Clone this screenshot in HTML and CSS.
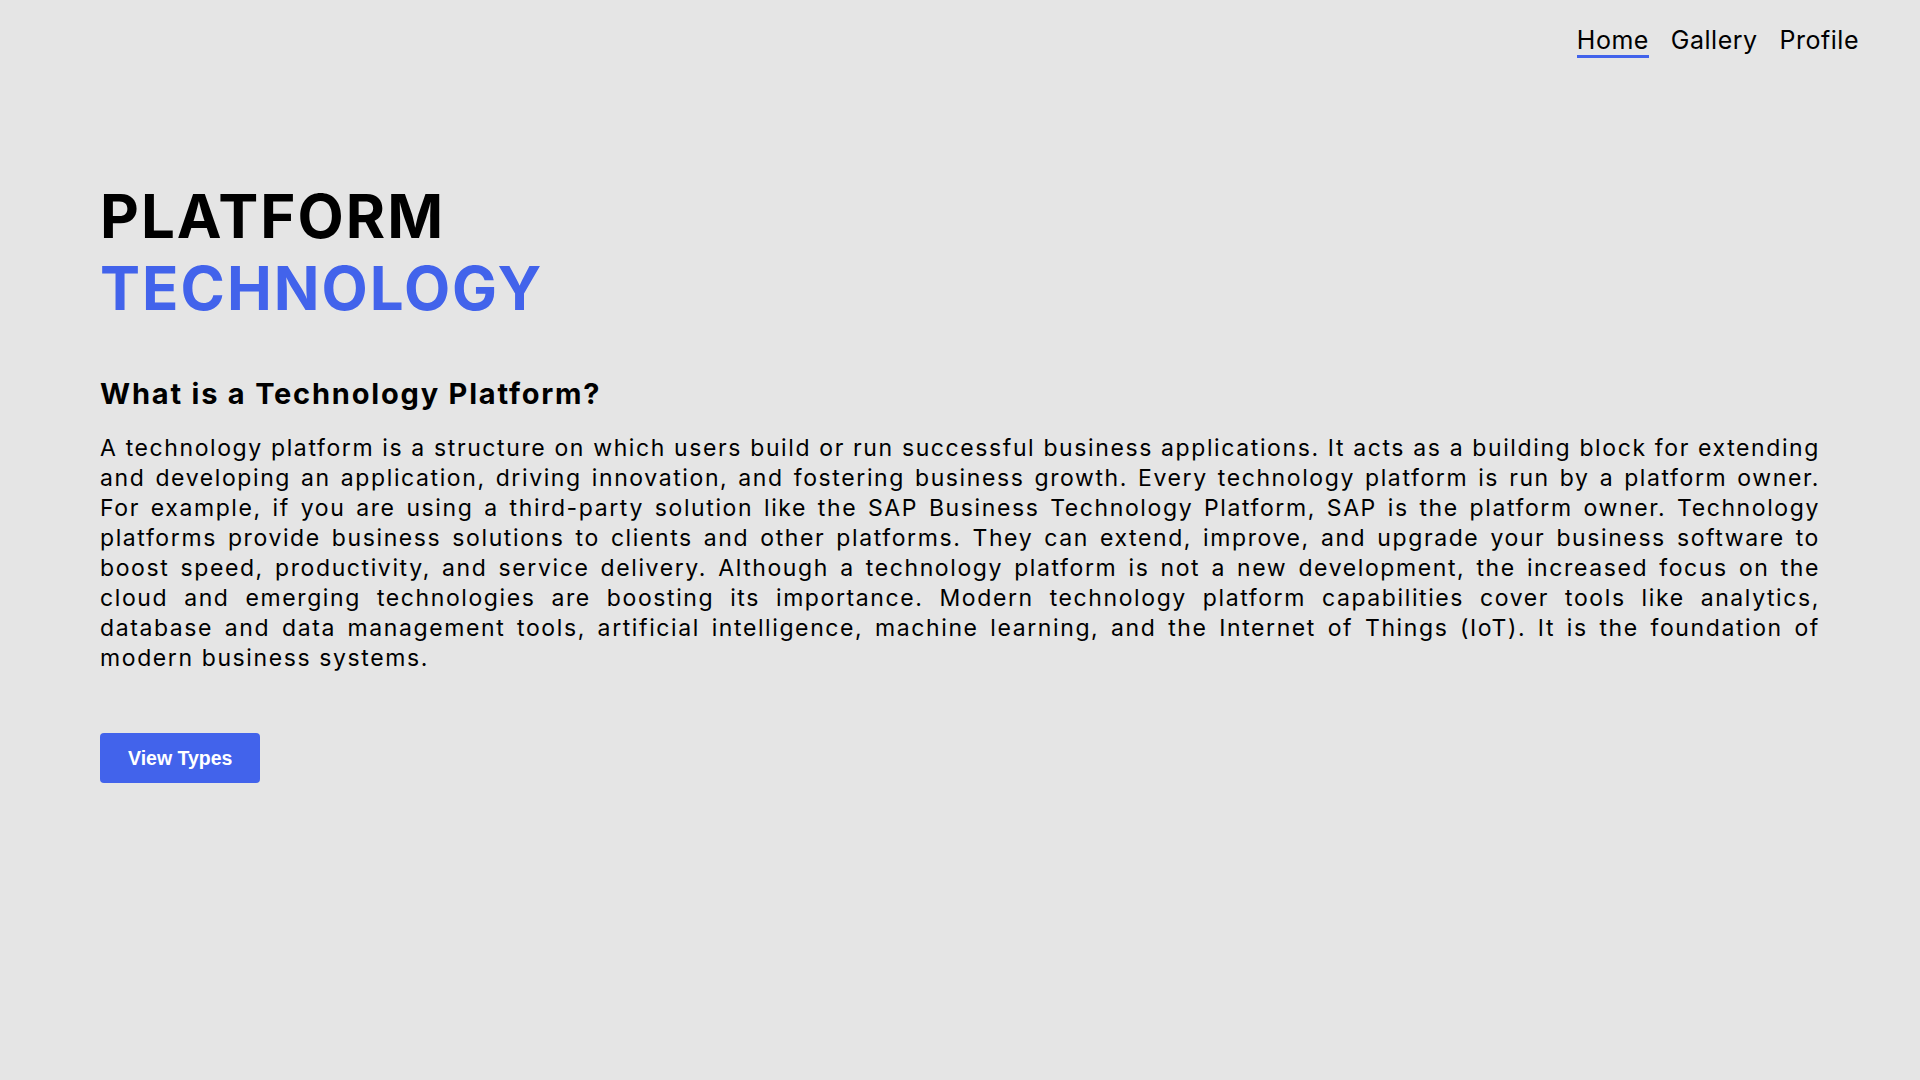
FILE: index.html
```html
<!DOCTYPE html>
<html lang="en">
<head>
<meta charset="utf-8">
<title>Platform Technology</title>
<link rel="stylesheet" href="styles.css">
</head>
<body>
<header class="topbar">
  <nav class="nav">
    <a class="nav-link active" href="#">Home</a>
    <a class="nav-link" href="#">Gallery</a>
    <a class="nav-link" href="#">Profile</a>
  </nav>
</header>
<main class="content">
  <h1 class="title"><span class="title-dark">PLATFORM</span><span class="title-blue">TECHNOLOGY</span></h1>
  <h2 class="subtitle">What is a Technology Platform?</h2>
  <p class="text">A technology platform is a structure on which users build or run successful business applications. It acts as a building block for extending and developing an application, driving innovation, and fostering business growth. Every technology platform is run by a platform owner. For example, if you are using a third-party solution like the SAP Business Technology Platform, SAP is the platform owner. Technology platforms provide business solutions to clients and other platforms. They can extend, improve, and upgrade your business software to boost speed, productivity, and service delivery. Although a technology platform is not a new development, the increased focus on the cloud and emerging technologies are boosting its importance. Modern technology platform capabilities cover tools like analytics, database and data management tools, artificial intelligence, machine learning, and the Internet of Things (IoT). It is the foundation of modern business systems.</p>
  <button class="btn" type="button">View Types</button>
</main>
</body>
</html>
```
FILE: styles.css
```css
* { box-sizing: border-box; }
html, body {
  margin: 0;
  padding: 0;
  background: #e5e5e5;
  color: #000;
  font-family: Inter, "Noto Sans", sans-serif;
}
body { min-height: 1080px; }

.topbar {
  display: flex;
  justify-content: flex-end;
  padding: 25px 61px 0 100px;
}
.nav {
  display: flex;
  gap: 22px;
}
.nav-link {
  font-size: 25px;
  line-height: 30px;
  letter-spacing: 0.5px;
  color: #000;
  text-decoration: none;
  border-bottom: 3px solid transparent;
}
.nav-link.active { border-bottom-color: #4263eb; }

.content {
  padding: 0 100px;
  display: flex;
  flex-direction: column;
  align-items: flex-start;
}
.title {
  margin: 122px 0 0;
  font-size: 60px;
  line-height: 72px;
  font-weight: 700;
  letter-spacing: 2px;
  display: flex;
  flex-direction: column;
}
.title-dark { color: #000; }
.title-blue { color: #4263eb; }

.subtitle {
  margin: 52px 0 0;
  font-size: 29px;
  line-height: 35px;
  font-weight: 700;
  letter-spacing: 1.8px;
}
.text {
  margin: 22px 0 0;
  font-size: 23px;
  line-height: 30px;
  letter-spacing: 1.6px;
  text-align: justify;
  width: 100%;
}
.btn {
  margin-top: 60px;
  height: 50px;
  padding: 0 28px;
  border: none;
  border-radius: 4px;
  background: #4263eb;
  color: #fff;
  font-family: "Liberation Sans", Arial, sans-serif;
  font-size: 19.5px;
  font-weight: 700;
}
```
